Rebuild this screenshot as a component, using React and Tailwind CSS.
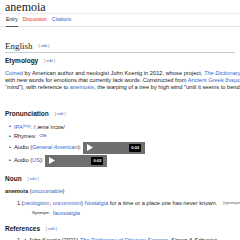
const Edit = () => (
  <span className="ml-[6px] text-[4px] font-normal font-['Liberation_Sans',sans-serif] text-[#72777d]">
    [ <span className="text-[#3366cc]">edit</span> ]
  </span>
);

const Player = ({ className = '' }) => (
  <span className={`inline-flex items-center justify-between w-[62px] h-[12px] bg-[#6f6f6f] px-[4px] ${className}`}>
    <svg width="6" height="7" viewBox="0 0 6 7">
      <path d="M0 0 L6 3.5 L0 7 Z" fill="#fff" />
    </svg>
    <span className="bg-black text-white text-[4px] font-bold px-[2px] h-[8px] leading-[8px] rounded-[1px]">0:02</span>
  </span>
);

const Bullet = ({ children, className = '' }) => (
  <div className={`flex items-center whitespace-nowrap pl-[9px] ${className}`}>
    <span className="w-[5px] text-[5px]">•</span>
    {children}
  </div>
);

export default function App() {
  return (
    <div className="w-[240px] h-[240px] overflow-hidden bg-white text-[#202122] font-['Liberation_Sans',Arial,sans-serif] text-[5.7px]">
      <div className="h-[14px] border-b border-[#eaecf0] px-[5px] flex items-center">
        <h1 className="font-['Liberation_Serif',serif] text-[12px] leading-[12px]">anemoia</h1>
      </div>
      <div className="h-[13px] border-b border-[#dfe1e5] px-[6px] flex items-stretch gap-[5px] text-[5px]">
        <span className="flex items-center border-b border-[#54595d] -mb-[1px]">Entry</span>
        <span className="flex items-center text-[#dd3333]">Discussion</span>
        <span className="flex items-center text-[#3366cc]">Citations</span>
      </div>

      <div className="mt-[13px] mx-[5px] h-[13px] border-b border-[#c8ccd1] flex items-center">
        <h2 className="font-['Liberation_Serif',serif] text-[9px] leading-[9px]">English</h2>
        <Edit />
      </div>

      <div className="mt-[4px] px-[5px] h-[8px] flex items-center">
        <h3 className="font-bold text-[6.5px]">Etymology</h3>
        <Edit />
      </div>
      <div className="mt-[5px] px-[5px] leading-[7px] whitespace-nowrap">
        <div>
          <span className="text-[#3366cc]">Coined</span> by American author and neologist John Koenig in 2012, whose project,{' '}
          <i className="text-[#3366cc]">The Dictionary of Obscure Sorrows</i>
        </div>
        <div>
          with new words for emotions that currently lack words. Constructed from{' '}
          <span className="text-[#3366cc]">Ancient Greek</span> <span className="text-[#3366cc]">ἄνεμος</span>
        </div>
        <div>
          “mind”), with reference to <span className="text-[#3366cc]">anemosis</span>, the warping of a tree by high wind "until it seems to bend backwards
        </div>
      </div>

      <div className="mt-[19px] px-[5px] h-[8px] flex items-center">
        <h3 className="font-bold text-[6.5px]">Pronunciation</h3>
        <Edit />
      </div>
      <div className="mt-[4px]">
        <Bullet className="h-[10px]">
          <span className="text-[#3366cc]">IPA</span>
          <sup className="text-[3.5px] text-[#3366cc] -top-[1px]">(key)</sup>
          <span>: /ˌænəˈmɔɪə/</span>
        </Bullet>
        <Bullet className="h-[9px]">
          Rhymes: <span className="ml-[2px] text-[#3366cc] text-[4.5px]">-ɔɪə</span>
        </Bullet>
        <Bullet className="h-[13px]">
          Audio (<i className="text-[#3366cc]">General American</i>):
          <Player className="ml-[2px]" />
        </Bullet>
        <Bullet className="h-[13px]">
          Audio (<span className="text-[#3366cc]">US</span>):
          <Player className="ml-[2px]" />
        </Bullet>
      </div>

      <div className="mt-[8px] px-[5px] h-[8px] flex items-center">
        <h3 className="font-bold text-[6.5px]">Noun</h3>
        <Edit />
      </div>
      <div className="mt-[4px] px-[5px] h-[8px] flex items-center whitespace-nowrap">
        <b>anemoia</b>&nbsp;(<span className="text-[#3366cc]">uncountable</span>)
      </div>
      <div className="mt-[4px] pl-[17px] h-[8px] flex items-center whitespace-nowrap">
        <span className="w-[7px]">1.</span>
        <span>
          (<i className="text-[#3366cc]">neologism</i>, <i className="text-[#3366cc]">uncommon</i>){' '}
          <span className="text-[#3366cc]">Nostalgia</span> for a time or a place one has never known.
        </span>
        <span className="ml-[6px] text-[4px] text-[#54595d]">[synonyms ▼]</span>
      </div>
      <div className="mt-[2px] pl-[32px] h-[8px] flex items-center whitespace-nowrap">
        <span className="text-[4px]">Synonym:</span>
        <span className="ml-[3px] text-[#3366cc]">fauxstalgia</span>
      </div>

      <div className="mt-[8px] px-[5px] h-[8px] flex items-center">
        <h3 className="font-bold text-[6.5px]">References</h3>
        <Edit />
      </div>
      <div className="mt-[3px] pl-[17px] h-[8px] flex items-center whitespace-nowrap">
        <span className="w-[7px]">1.</span>
        <span>
          ↑ John Koenig (2021) <i className="text-[#3366cc]">The Dictionary of Obscure Sorrows</i>, Simon &amp; Schuster
        </span>
      </div>
    </div>
  );
}
